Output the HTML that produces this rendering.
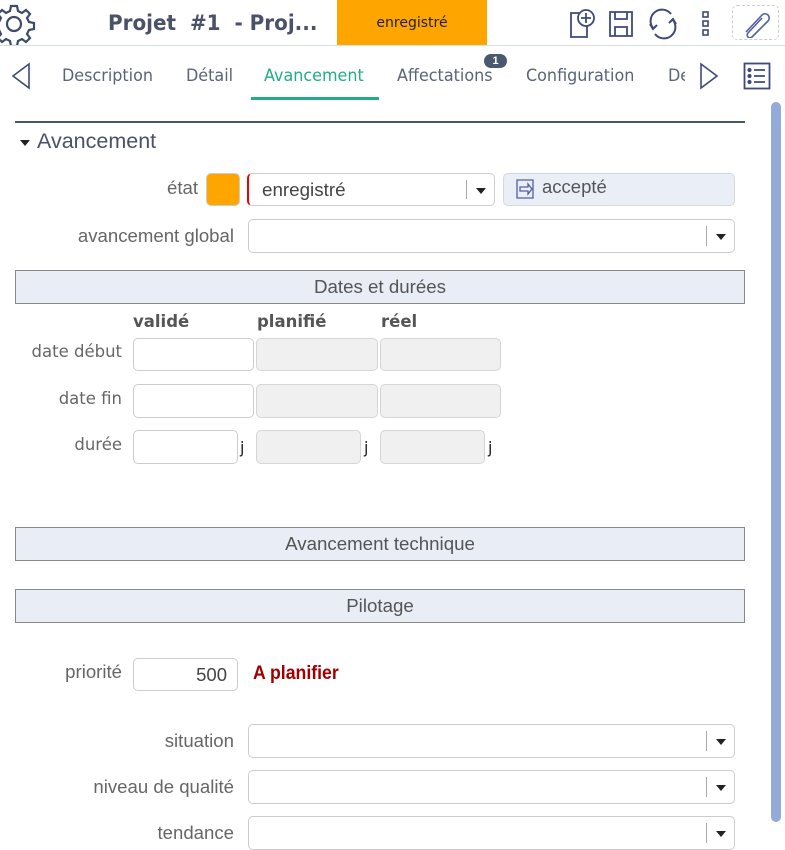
<!DOCTYPE html>
<html><head><meta charset="utf-8"><style>
*{box-sizing:border-box;margin:0;padding:0}
body{width:785px;height:834px;overflow:hidden;background:#fff;position:relative;font-family:"Liberation Sans",sans-serif;color:#555}
.a{position:absolute}
.lbl{position:absolute;text-align:right;font-size:18.6px;color:#666;white-space:nowrap}
.dv{font-family:"DejaVu Sans",sans-serif}
.box{position:absolute;border:1px solid #ccc;border-radius:5px;background:#fff}
.gr{background:#f0f0f0;border-color:#d5d5d5}
.sel .arr{position:absolute;right:0;top:6px;bottom:6px;width:28px;border-left:1px solid #aaa}
.sel .arr:after{content:"";position:absolute;left:9px;top:8px;border-left:5px solid transparent;border-right:5px solid transparent;border-top:6px solid #222}
.sec{position:absolute;left:15px;width:730px;height:34px;background:#e9edf6;border:1px solid #888;text-align:center;line-height:32px;font-size:18.7px;color:#555}
.tab{position:absolute;top:66px;font-size:17px;color:#5a6478;font-family:"DejaVu Sans",sans-serif;transform:scaleX(.94);transform-origin:left}
.dl{position:absolute;font-size:16.5px;color:#666;text-align:right}
</style></head><body>
<svg class="a" style="left:-8px;top:2px" width="44" height="44" viewBox="0 0 44 44" fill="none" stroke="#3d4a6b" stroke-width="2.2"><circle cx="22" cy="22" r="7"/><path d="M19 4h6l1 5 4 2 4-3 4 4-3 4 2 4 5 1v6l-5 1-2 4 3 4-4 4-4-3-4 2-1 5h-6l-1-5-4-2-4 3-4-4 3-4-2-4-5-1v-6l5-1 2-4-3-4 4-4 4 3 4-2z"/></svg>
<div class="a" style="left:108px;top:11px;font-size:21px;font-weight:bold;color:#4a5168;font-family:'DejaVu Sans',sans-serif;transform:scaleX(.95);transform-origin:left;white-space:pre">Projet  #1  - Proj...</div>
<div class="a" style="left:337px;top:0;width:150px;height:45px;background:#ffa500;color:#222;text-align:center;line-height:45px"><span class="dv" style="font-size:14px">enregistré</span></div>
<div class="a" style="left:0;top:45px;width:785px;height:1px;background:#d5dde6"></div>
<svg class="a" style="left:567px;top:8px" width="30" height="32" viewBox="0 0 30 32" fill="none" stroke="#3d4a7a" stroke-width="1.8"><path d="M12 5H4v24h16V18"/><circle cx="19" cy="10" r="8"/><path d="M19 5v10M14 10h10"/></svg>
<svg class="a" style="left:608px;top:10px" width="26" height="28" viewBox="0 0 26 28" fill="none" stroke="#3d4a7a" stroke-width="1.8"><path d="M2 2h22v24H2z"/><path d="M7 2v7h12V2M7 26v-9h12v9"/></svg>
<svg class="a" style="left:647px;top:8px" width="32" height="32" viewBox="0 0 32 32" fill="none" stroke="#3d4a7a" stroke-width="2"><path d="M6 20A11 11 0 0 1 24 6M26 12A11 11 0 0 1 8 26"/><path d="M3 16l3 5 4-4M29 16l-3-5-4 4"/></svg>
<svg class="a" style="left:701px;top:10px" width="10" height="28" viewBox="0 0 10 28" fill="none" stroke="#3d4a7a" stroke-width="1.6"><rect x="2" y="2" width="5" height="5"/><rect x="2" y="11" width="5" height="5"/><rect x="2" y="20" width="5" height="5"/></svg>
<div class="a" style="left:732px;top:5px;width:47px;height:35px;border:1px dashed #ccc;border-radius:5px"></div>
<svg class="a" style="left:740px;top:8px" width="32" height="30" viewBox="0 0 32 30" fill="none" stroke="#5060a0" stroke-width="1.6"><path d="M6 24L22 7a4 4 0 0 1 6 6L12 29a2.5 2.5 0 0 1-4-4L22 10"/></svg>
<svg class="a" style="left:10px;top:62px" width="22" height="28" viewBox="0 0 22 28" fill="none" stroke="#3d4a7a" stroke-width="1.6"><path d="M19 2L3 14l16 12z"/></svg>
<div class="tab" style="left:62px">Description</div>
<div class="tab" style="left:186px">Détail</div>
<div class="tab" style="left:264px;color:#1fae86">Avancement</div>
<div class="a" style="left:251px;top:97px;width:128px;height:3px;background:#1fae86"></div>
<div class="tab" style="left:397px">Affectations</div>
<div class="a" style="left:484px;top:54px;width:23px;height:14px;background:#4a5870;border-radius:7px;color:#fff;font-size:11px;font-weight:bold;text-align:center;line-height:14px">1</div>
<div class="tab" style="left:526px">Configuration</div>
<div class="a" style="left:668px;top:60px;width:17px;height:30px;overflow:hidden"><div class="tab" style="left:0;top:6px">De</div></div>
<svg class="a" style="left:698px;top:62px" width="22" height="28" viewBox="0 0 22 28" fill="none" stroke="#3d4a7a" stroke-width="1.6"><path d="M3 2l16 12L3 26z"/></svg>
<svg class="a" style="left:743px;top:62px" width="28" height="28" viewBox="0 0 28 28" fill="none" stroke="#3d4a7a" stroke-width="1.8"><rect x="1.5" y="1.5" width="25" height="25"/><path d="M11 8h11M11 14h11M11 20h11"/><circle cx="6.5" cy="8" r="1.2" fill="#3d4a7a"/><circle cx="6.5" cy="14" r="1.2" fill="#3d4a7a"/><circle cx="6.5" cy="20" r="1.2" fill="#3d4a7a"/></svg>
<div class="a" style="left:771px;top:102px;width:10px;height:720px;background:#94aad8;border-radius:5px"></div>
<div class="a" style="left:15px;top:121px;width:730px;height:2px;background:#4a5568"></div>
<div class="a" style="left:20px;top:140px;border-left:5px solid transparent;border-right:5px solid transparent;border-top:6px solid #222"></div>
<div class="a" style="left:37px;top:129px;font-size:21.5px;color:#4a5168">Avancement</div>
<div class="lbl" style="right:587px;top:177px">état</div>
<div class="a" style="left:206px;top:173px;width:34px;height:33px;background:#ffa500;border:1px solid #ccc;border-radius:5px"></div>
<div class="box sel" style="left:247px;top:173px;width:248px;height:33px;border-left:2px solid #e00"><div class="a" style="left:13px;top:5px;font-size:18.8px;color:#444">enregistré</div><div class="arr"></div></div>
<div class="box" style="left:503px;top:173px;width:232px;height:33px;background:#eaeef7;border-color:#d5d8df"></div>
<svg class="a" style="left:516px;top:179px" width="20" height="20" viewBox="0 0 20 20" fill="none" stroke="#5060a0" stroke-width="1.3"><path d="M1 1h16v18H1z"/><path d="M4 8h8V5l4 5-4 5v-3H4z"/></svg>
<div class="a" style="left:542px;top:176px;font-size:18.5px;color:#555">accepté</div>
<div class="lbl" style="right:551px;top:225px">avancement global</div>
<div class="box sel" style="left:248px;top:219px;width:487px;height:34px"><div class="arr"></div></div>
<div class="sec" style="top:270px">Dates et durées</div>
<div class="a dv" style="left:133px;top:312px;font-size:16.5px;font-weight:bold;color:#555">validé</div>
<div class="a dv" style="left:257px;top:312px;font-size:16.5px;font-weight:bold;color:#555">planifié</div>
<div class="a dv" style="left:381px;top:312px;font-size:16.5px;font-weight:bold;color:#555">réel</div>
<div class="dl dv" style="right:663px;top:342px">date début</div>
<div class="dl dv" style="right:663px;top:389px">date fin</div>
<div class="dl dv" style="right:663px;top:435px">durée</div>
<div class="box" style="left:133px;top:338px;width:121px;height:33px"></div>
<div class="box gr" style="left:256px;top:338px;width:122px;height:33px"></div>
<div class="box gr" style="left:380px;top:338px;width:121px;height:33px"></div>
<div class="box" style="left:133px;top:384px;width:121px;height:34px"></div>
<div class="box gr" style="left:256px;top:384px;width:122px;height:34px"></div>
<div class="box gr" style="left:380px;top:384px;width:121px;height:34px"></div>
<div class="box" style="left:133px;top:430px;width:105px;height:34px"></div>
<div class="box gr" style="left:256px;top:430px;width:105px;height:34px"></div>
<div class="box gr" style="left:380px;top:430px;width:105px;height:34px"></div>
<div class="a dv" style="left:240px;top:438px;font-size:16px;color:#222">j</div>
<div class="a dv" style="left:364px;top:438px;font-size:16px;color:#222">j</div>
<div class="a dv" style="left:488px;top:438px;font-size:16px;color:#222">j</div>
<div class="sec" style="top:527px">Avancement technique</div>
<div class="sec" style="top:589px">Pilotage</div>
<div class="lbl" style="right:663px;top:661px">priorité</div>
<div class="box" style="left:133px;top:658px;width:105px;height:33px"><div class="a" style="right:10px;top:5px;font-size:18.5px;color:#444">500</div></div>
<div class="a" style="left:253px;top:663px;font-size:19px;font-weight:bold;color:#a00000;transform:scaleX(.93);transform-origin:left">A planifier</div>
<div class="lbl" style="right:551px;top:730px">situation</div>
<div class="box sel" style="left:248px;top:724px;width:487px;height:34px"><div class="arr"></div></div>
<div class="lbl" style="right:551px;top:776px">niveau de qualité</div>
<div class="box sel" style="left:248px;top:770px;width:487px;height:34px"><div class="arr"></div></div>
<div class="lbl" style="right:551px;top:822px">tendance</div>
<div class="box sel" style="left:248px;top:816px;width:487px;height:34px"><div class="arr"></div></div>
</body></html>
